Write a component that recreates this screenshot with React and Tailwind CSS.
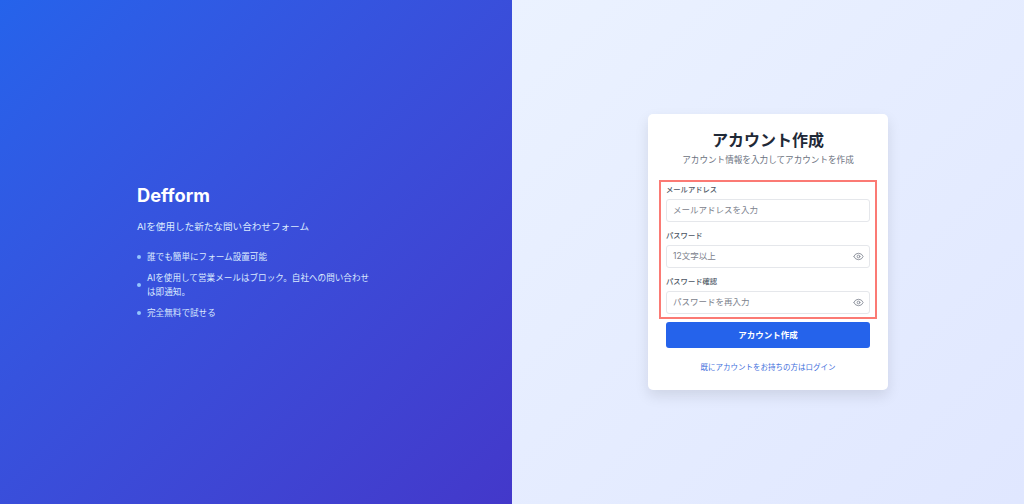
import React from "react";

function Eye() {
  return (
    <svg className="absolute right-[5.5px] top-[5px] w-[11px] h-[11px] text-[#6b7280] opacity-80" viewBox="0 0 24 24" fill="none" stroke="currentColor" strokeWidth="2" strokeLinecap="round" strokeLinejoin="round">
      <path d="M2.06 12.35a1 1 0 0 1 0-.7 10.75 10.75 0 0 1 19.88 0 1 1 0 0 1 0 .7 10.75 10.75 0 0 1-19.88 0" />
      <circle cx="12" cy="12" r="3" />
    </svg>
  );
}

function Field({ label, placeholder, eye, className = "" }) {
  return (
    <div className={`flex flex-col ${className}`}>
      <label className="text-[7.3px] leading-[12px] font-medium text-[#4b5563] mb-[3px]">{label}</label>
      <div className="relative h-[23px] bg-white border border-[#e5e7eb] rounded-[3px] flex items-center px-[6px]">
        <span className="text-[8.5px] text-[#7b818c]">{placeholder}</span>
        {eye && <Eye />}
      </div>
    </div>
  );
}

const Dot = () => <span className="w-[4px] h-[4px] rounded-full bg-[#93c5fd] shrink-0" />;

export default function App() {
  return (
    <div className="flex w-[1024px] h-[504px] overflow-hidden font-['Inter','Noto_Sans_CJK_JP',sans-serif]">
      <div className="w-[512px] h-full bg-gradient-to-br from-[#2563eb] to-[#4338ca] flex flex-col justify-center pl-[137px] pb-[1px] text-white">
        <h1 className="text-[18.3px] leading-[24px] font-bold">Defform</h1>
        <p className="text-[9.6px] leading-[14px] mt-[13px] text-[#dbeafe]">AIを使用した新たな問い合わせフォーム</p>
        <ul className="mt-[16px] w-[234px] flex flex-col gap-[7px] text-[8.6px] leading-[14px] text-[#dbeafe]">
          <li className="flex items-center gap-[6px]"><Dot />誰でも簡単にフォーム設置可能</li>
          <li className="flex items-center gap-[6px]"><Dot />AIを使用して営業メールはブロック。自社への問い合わせは即通知。</li>
          <li className="flex items-center gap-[6px]"><Dot />完全無料で試せる</li>
        </ul>
      </div>
      <div className="w-[512px] h-full bg-gradient-to-br from-[#ebf2ff] to-[#e0e7ff] flex items-center justify-center">
        <div className="w-[240px] h-[276px] bg-white rounded-[5px] shadow-[0_6px_14px_rgba(0,0,0,0.1)] px-[18px] pt-[15px] flex flex-col">
          <h2 className="text-[16px] leading-[22px] font-bold text-[#1f2937] text-center">アカウント作成</h2>
          <p className="text-[8.6px] leading-[12px] text-[#6b7280] text-center mt-[3px]">アカウント情報を入力してアカウントを作成</p>
          <div className="-mx-[7px] mt-[14px] px-[5px] h-[139px] border-2 border-[#fb7a74] flex flex-col pt-[2px]">
            <Field label="メールアドレス" placeholder="メールアドレスを入力" />
            <Field className="mt-[8px]" label="パスワード" placeholder="12文字以上" eye />
            <Field className="mt-[8px]" label="パスワード確認" placeholder="パスワードを再入力" eye />
          </div>
          <button className="mt-[3px] h-[26px] w-full rounded-[3px] bg-[#2563eb] text-white text-[8.5px] font-semibold">アカウント作成</button>
          <a className="mt-[14px] text-center text-[7.5px] leading-[12px] text-[#3f6fdc]">既にアカウントをお持ちの方はログイン</a>
        </div>
      </div>
    </div>
  );
}
